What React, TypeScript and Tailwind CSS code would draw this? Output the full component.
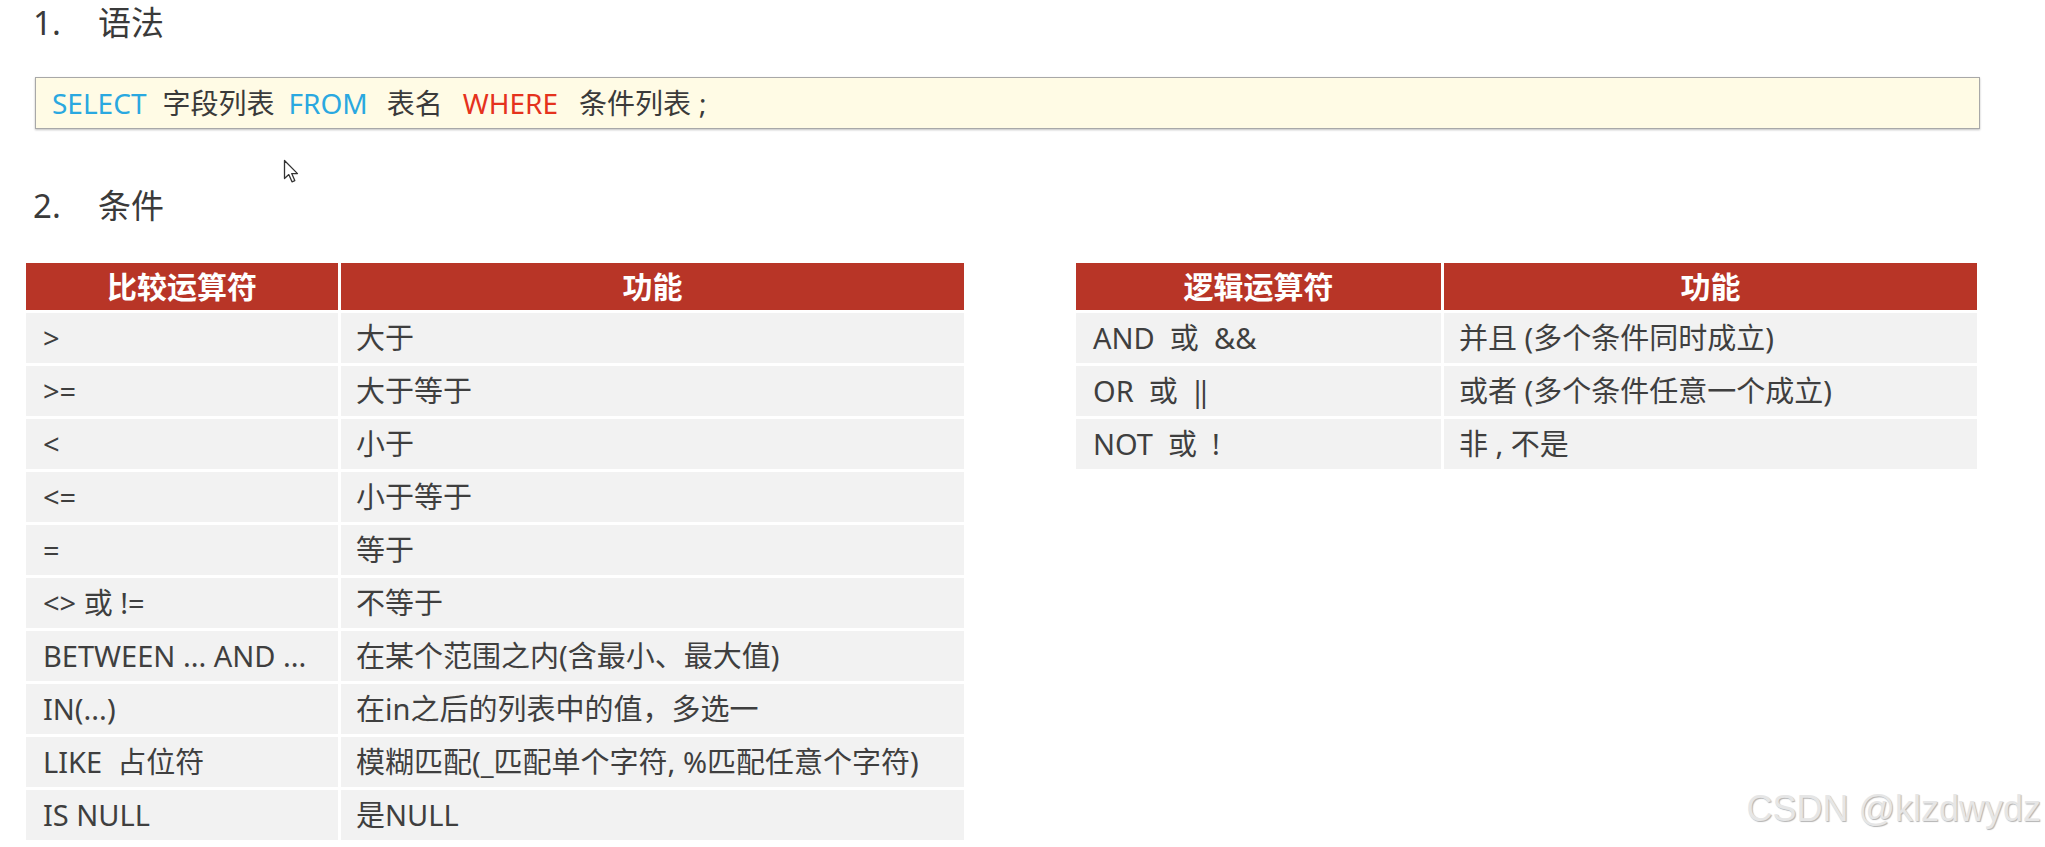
const compareRows: [string, string][] = [
  ['>', '大于'],
  ['>=', '大于等于'],
  ['<', '小于'],
  ['<=', '小于等于'],
  ['=', '等于'],
  ['<> 或 !=', '不等于'],
  ['BETWEEN ... AND ...', '在某个范围之内(含最小、最大值)'],
  ['IN(...)', '在in之后的列表中的值，多选一'],
  ['LIKE  占位符', '模糊匹配(_匹配单个字符, %匹配任意个字符)'],
  ['IS NULL', '是NULL'],
]

const logicRows: [string, string][] = [
  ['AND  或  &&', '并且 (多个条件同时成立)'],
  ['OR  或  ‖', '或者 (多个条件任意一个成立)'],
  ['NOT  或  !', '非 , 不是'],
]

function OpTable({
  title,
  rows,
  firstCol,
  width,
}: {
  title: string
  rows: [string, string][]
  firstCol: string
  width: string
}) {
  return (
    <div className={`flex flex-col ${width}`}>
      <div className="flex h-[47px] bg-[#b83527] text-white font-bold text-[30px]">
        <div className={`${firstCol} flex items-center justify-center border-r-[3px] border-white`}>
          {title}
        </div>
        <div className="flex-1 flex items-center justify-center">功能</div>
      </div>
      {rows.map(([op, desc]) => (
        <div key={op} className="flex h-[50px] mt-[3px] text-[29px] text-[#3f3f3f]">
          <div className={`${firstCol} flex items-center pl-[17px] bg-[#f2f2f2] border-r-[3px] border-white whitespace-pre`}>
            {op}
          </div>
          <div className="flex-1 flex items-center pl-[15px] bg-[#f2f2f2] whitespace-pre">{desc}</div>
        </div>
      ))}
    </div>
  )
}

export default function App() {
  return (
    <div className="relative w-[2045px] h-[847px] bg-white overflow-hidden text-[#3a3a3a] font-['Noto_Sans','Noto_Sans_CJK_SC',sans-serif]">
      <div className="flex items-center h-[40px] mt-[3px] pl-[33px] text-[33px]">
        <span className="w-[65px]">1.</span>
        <span>语法</span>
      </div>

      <div className="ml-[35px] mt-[34px] w-[1945px] h-[52px] flex items-center pl-[16px] bg-[#fffbe5] border border-[#a8a8a8] shadow-[0_1px_2px_rgba(0,0,0,0.25)] text-[28px] whitespace-pre">
        <span className="text-[#2aa8e0] mr-[16px]">SELECT</span>
        <span className="mr-[14px]">字段列表</span>
        <span className="text-[#2aa8e0] mr-[19px]">FROM</span>
        <span className="mr-[20px]">表名</span>
        <span className="text-[#e5321d] mr-[21px]">WHERE</span>
        <span className="mr-[8px]">条件列表</span>
        <span>;</span>
      </div>

      <div className="flex items-center h-[40px] mt-[57px] pl-[33px] text-[33px]">
        <span className="w-[65px]">2.</span>
        <span>条件</span>
      </div>

      <div className="flex mt-[37px] pl-[26px] gap-[112px]">
        <OpTable title="比较运算符" rows={compareRows} firstCol="w-[315px]" width="w-[938px]" />
        <OpTable title="逻辑运算符" rows={logicRows} firstCol="w-[368px]" width="w-[901px]" />
      </div>

      {/* mouse pointer */}
      <svg className="absolute left-[283px] top-[159px]" width="17" height="25" viewBox="0 0 17 25">
        <path
          d="M1.5 1.5 L1.5 19.5 L5.8 15.6 L9 22.8 L11.8 21.6 L8.7 14.6 L14.5 14.6 Z"
          fill="white"
          stroke="#333"
          strokeWidth="1.3"
          strokeLinejoin="round"
        />
      </svg>

      <div className="absolute right-[4px] top-[791px] text-[36px] leading-none text-[#e6e6e6] font-['Liberation_Sans',sans-serif] [text-shadow:1px_1px_1px_rgba(0,0,0,0.3)]">
        CSDN @klzdwydz
      </div>
    </div>
  )
}
